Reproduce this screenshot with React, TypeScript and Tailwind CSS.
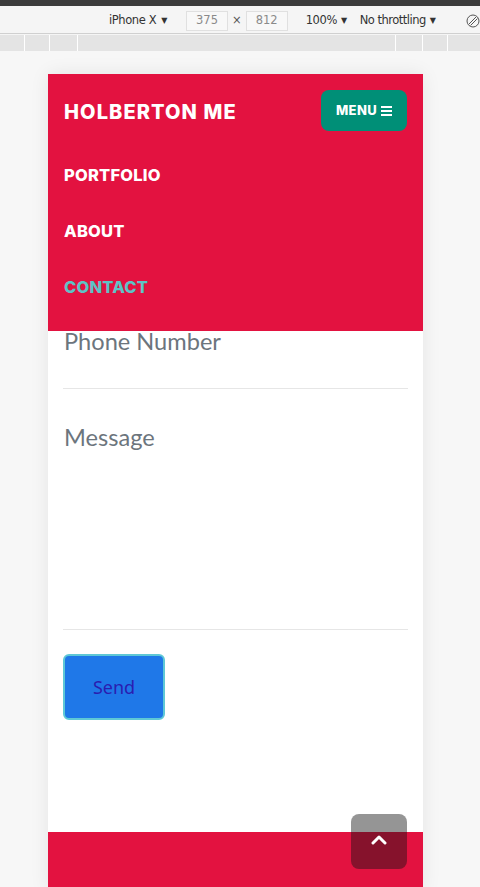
import React from "react";

const navLinks = [
  { label: "PORTFOLIO", active: false },
  { label: "ABOUT", active: false },
  { label: "CONTACT", active: true },
];

function DevToolbar() {
  return (
    <div className="font-['DejaVu_Sans',sans-serif] text-[11.5px] text-[#333] whitespace-nowrap">
      <div className="h-[6px] bg-[#3c3c3c]" />
      <div className="h-[28px] pt-[2px] bg-[#f5f5f5] border-b border-[#d0d0d0] flex items-center">
        <div className="ml-[109px] w-[61px] shrink-0 flex items-center gap-[5px] tracking-[-0.4px]">
          <span>iPhone X</span>
          <span className="text-[8px]">▼</span>
        </div>
        <div className="ml-[16px] shrink-0 w-[42px] h-[20px] border border-[#e0e0e0] bg-[#f8f8f8] text-[#8a8a8a] flex items-center justify-center">
          375
        </div>
        <span className="mx-[4px] text-[#555]">×</span>
        <div className="shrink-0 w-[42px] h-[20px] border border-[#e0e0e0] bg-[#f8f8f8] text-[#8a8a8a] flex items-center justify-center">
          812
        </div>
        <div className="ml-[18px] w-[43px] shrink-0 flex items-center gap-[4px] tracking-[-0.4px]">
          <span>100%</span>
          <span className="text-[8px]">▼</span>
        </div>
        <div className="ml-[11px] w-[84px] shrink-0 flex items-center gap-[4px] tracking-[-0.5px]">
          <span>No throttling</span>
          <span className="text-[8px]">▼</span>
        </div>
        <svg className="ml-[22px] shrink-0" width="14" height="14" viewBox="0 0 14 14" fill="none" stroke="#555" strokeWidth="1">
          <circle cx="7" cy="7" r="6" />
          <path d="M3 10 L10 3 M4.5 11.5 L11.5 4.5" />
        </svg>
      </div>
      <div className="h-[1px] bg-[#f5f5f5]" />
      <div className="h-[16px] bg-[#e4e4e4] flex">
        <div className="w-[24px]" />
        <div className="w-[25px] border-l border-white" />
        <div className="w-[28px] border-l border-white" />
        <div className="w-[318px] border-l border-white" />
        <div className="w-[27px] border-l border-white" />
        <div className="w-[25px] border-l border-white" />
        <div className="flex-1 border-l border-white" />
      </div>
    </div>
  );
}

function MenuIcon() {
  return (
    <svg width="11" height="10" viewBox="0 0 11 10" fill="white">
      <rect x="0" y="0" width="11" height="2" />
      <rect x="0" y="4" width="11" height="2" />
      <rect x="0" y="8" width="11" height="2" />
    </svg>
  );
}

export default function App() {
  return (
    <div className="h-[887px] overflow-hidden bg-[#f7f7f7]">
      <DevToolbar />
      <div className="pt-[23px] pl-[48px]">
        <div className="relative w-[375px] bg-white shadow-[0_0_18px_rgba(0,0,0,0.08)]">
          <header className="bg-[#e31240] px-[16px] pt-[16px] pb-[16px] font-['Inter',sans-serif]">
            <div className="flex items-center justify-between h-[41px]">
              <span className="pt-[3px] text-white font-extrabold text-[20px] tracking-[1.1px]">HOLBERTON ME</span>
              <button className="w-[86px] h-[41px] rounded-[8px] bg-[#008f77] text-white font-extrabold text-[13px] tracking-[0.4px] flex items-center justify-center gap-[4px]">
                MENU
                <MenuIcon />
              </button>
            </div>
            <nav className="mt-[16px] flex flex-col">
              {navLinks.map((link) => (
                <a
                  key={link.label}
                  className={`h-[56px] flex items-center font-extrabold text-[16.5px] tracking-[0.2px] ${link.active ? "text-[#5ec3c6]" : "text-white"}`}
                >
                  {link.label}
                </a>
              ))}
            </nav>
          </header>
          <form className="px-[15px] font-['Lato',sans-serif]">
            <div className="h-[58px] border-b border-[#e6e6e6]">
              <div className="leading-[20px] text-[23.6px] text-[#6c757d] pl-[1px]">Phone Number</div>
            </div>
            <div className="h-[241px] border-b border-[#e6e6e6] pt-[38px]">
              <div className="leading-[20px] text-[23.6px] text-[#6c757d] pl-[1px]">Message</div>
            </div>
            <button
              type="button"
              className="mt-[24px] w-[102px] h-[66px] rounded-[6px] bg-[#1f78e8] border-2 border-[#5ec8d6] text-[18px] text-[#2a1db0] font-['Noto_Sans',sans-serif]"
            >
              Send
            </button>
          </form>
          <div className="h-[112px]" />
          <footer className="h-[60px] bg-[#e31240]" />
          <button className="absolute left-[303px] top-[740px] w-[56px] h-[55px] rounded-[8px] bg-[rgba(20,20,20,0.45)] flex justify-center pt-[21px]">
            <svg width="16" height="10" viewBox="0 0 16 10" fill="none" stroke="white" strokeWidth="3" strokeLinecap="round" strokeLinejoin="round">
              <path d="M2 8 L8 2 L14 8" />
            </svg>
          </button>
        </div>
      </div>
    </div>
  );
}
